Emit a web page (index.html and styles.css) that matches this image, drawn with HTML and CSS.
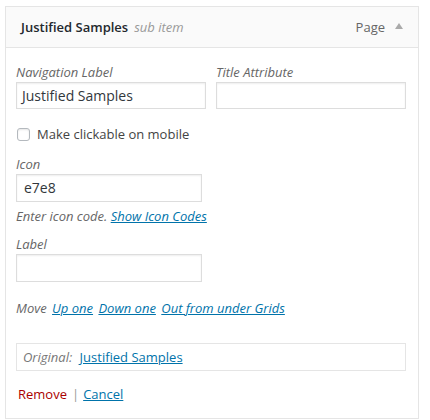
FILE: index.html
```html
<!DOCTYPE html>
<html>
<head>
<meta charset="utf-8">
<link rel="stylesheet" href="styles.css">
</head>
<body>
<div class="item">
  <div class="item-bar">
    <span class="item-title">Justified Samples</span>
    <span class="item-sub">sub item</span>
    <span class="item-type">Page</span>
    <span class="item-arrow"></span>
  </div>
  <div class="item-settings">
    <div class="row-two">
      <div class="field">
        <div class="lbl">Navigation Label</div>
        <div class="input wide">Justified Samples</div>
      </div>
      <div class="field">
        <div class="lbl">Title Attribute</div>
        <div class="input wide"></div>
      </div>
    </div>
    <div class="check-row">
      <span class="checkbox"></span>
      <span>Make clickable on mobile</span>
    </div>
    <div class="field">
      <div class="lbl">Icon</div>
      <div class="input short">e7e8</div>
      <div class="help">Enter icon code. <a class="link">Show Icon Codes</a></div>
    </div>
    <div class="field label-field">
      <div class="lbl">Label</div>
      <div class="input short"></div>
    </div>
    <div class="move">Move <a class="link mv">Up one</a> <a class="link mv">Down one</a> <a class="link mv">Out from under Grids</a></div>
    <div class="original"><span class="orig-lbl">Original:</span> <a class="link">Justified Samples</a></div>
    <div class="actions"><a class="remove">Remove</a><span class="sep">|</span><a class="link">Cancel</a></div>
  </div>
</div>
</body>
</html>
```

FILE: styles.css
```css
html, body {
  margin: 0;
  padding: 0;
  background: #fff;
}
body {
  font-family: "Open Sans", "Liberation Sans", sans-serif;
  font-size: 13px;
  color: #444;
}
.item {
  margin: 6px 0 0 5px;
  width: 412px;
  border: 1px solid #e5e5e5;
}
.item-bar {
  height: 40px;
  background: #fafafa;
  border-bottom: 1px solid #e5e5e5;
  display: flex;
  align-items: center;
  padding: 0 15px 0 15px;
}
.item-title {
  font-weight: 600;
  color: #23282d;
  font-size: 13px;
}
.item-sub {
  font-style: italic;
  color: #999;
  margin-left: 6px;
  font-size: 13px;
}
.item-type {
  margin-left: auto;
  color: #666;
  font-size: 13px;
}
.item-arrow {
  width: 0;
  height: 0;
  border-left: 4px solid transparent;
  border-right: 4px solid transparent;
  border-bottom: 6px solid #aaa;
  margin-left: 10px;
  margin-top: -2px;
}
.item-settings {
  padding: 15px 11px 14px 10px;
}
.row-two {
  display: flex;
  gap: 10px;
}
.lbl {
  font-style: italic;
  color: #666;
  line-height: 18px;
}
.input {
  box-sizing: border-box;
  border: 1px solid #ddd;
  box-shadow: inset 0 1px 2px rgba(0,0,0,0.07);
  height: 27px;
  line-height: 25px;
  padding: 0 5px;
  font-size: 14px;
  color: #32373c;
  margin-top: 1px;
}
.input.wide {
  width: 190px;
}
.input.short {
  width: 186px;
  height: 28px;
  line-height: 26px;
  padding-left: 7px;
}
.check-row {
  display: flex;
  align-items: center;
  margin-top: 16px;
  height: 18px;
  color: #444;
}
.checkbox {
  box-sizing: border-box;
  width: 13px;
  height: 13px;
  border: 1px solid #b4b9be;
  border-radius: 3px;
  box-shadow: inset 0 1px 2px rgba(0,0,0,0.1);
  margin: 0 7px 0 1px;
}
.check-row + .field {
  margin-top: 12px;
}
.help {
  font-style: italic;
  color: #666;
  margin-top: 4px;
  line-height: 20px;
}
.label-field {
  margin-top: 9px;
}
.link {
  color: #0073aa;
  text-decoration: underline;
  cursor: pointer;
}
.move {
  font-style: italic;
  color: #666;
  margin-top: 16px;
  line-height: 20px;
}
.mv {
  margin-left: 2px;
}
.original {
  box-sizing: border-box;
  width: 390px;
  height: 28px;
  border: 1px solid #e5e5e5;
  margin-top: 25px;
  padding: 0 0 0 6px;
  line-height: 26px;
}
.orig-lbl {
  font-style: italic;
  color: #777;
  margin-right: 4px;
}
.actions {
  margin-top: 13px;
  line-height: 20px;
  padding-left: 2px;
  font-size: 13px;
}
.remove {
  color: #a00;
}
.sep {
  color: #999;
  margin: 0 4px 0 5px;
}
```
